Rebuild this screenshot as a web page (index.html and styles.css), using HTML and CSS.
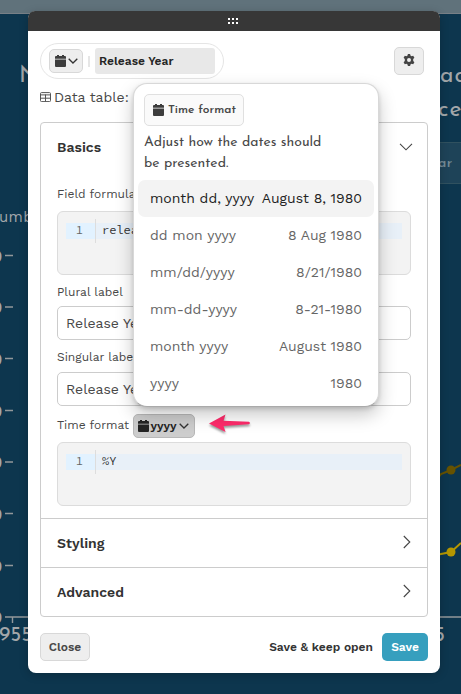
FILE: index.html
```html
<!DOCTYPE html>
<html lang="en">
<head>
<meta charset="utf-8">
<title>Field settings</title>
<link rel="stylesheet" href="styles.css">
</head>
<body>
<svg class="backdrop" width="461" height="694" viewBox="0 0 461 694" aria-hidden="true">
  <rect width="461" height="694" fill="#0d364e"/>
  <rect width="461" height="13" fill="#60727b"/>
  <rect y="13" width="461" height="1" fill="#788087"/>
  <rect x="400" y="142.500" width="80" height="41" fill="#1e4358" stroke="#30515f"/>
  <g class="chart-text">
    <text class="title" x="19" y="82">N</text>
    <text class="title" x="440" y="82">ac</text>
    <text class="title" x="438" y="116">ce</text>
    <text class="year" x="438" y="167">ar</text>
    <text class="axis" x="-1" y="222">umber</text>
    <text class="tick zero" x="-11" y="263">0</text>
    <text class="tick zero" x="-11" y="314">0</text>
    <text class="tick zero" x="-11" y="366">0</text>
    <text class="tick zero" x="-11" y="418">0</text>
    <text class="tick zero" x="-11" y="469">0</text>
    <text class="tick zero" x="-11" y="521">0</text>
    <text class="tick zero" x="-11" y="573">0</text>
    <text class="tick zero" x="-11" y="624">0</text>
    <text class="tick" x="-1" y="641">955</text>
    <text class="tick" x="434" y="641">5</text>
  </g>
  <path d="M5 255.500h8M5 307h8M5 358.500h8M5 410.500h8M5 462h8M5 513.500h8M5 565.500h8M5 617h456M12.500 617v6" stroke="#92989b" stroke-width="1.400" fill="none"/>
  <path d="M436 480L441 474L451 470L461 465" stroke="#665200" stroke-width="2" fill="none"/>
  <circle cx="451" cy="470" r="4.500" fill="#665200"/>
  <path d="M436 555L441 554L451 552L461 543" stroke="#b59700" stroke-width="2" fill="none"/>
  <circle cx="451" cy="552" r="4.500" fill="#b59700"/>
</svg>

<main class="modal">
  <header class="grip">
    <svg width="12" height="6" viewBox="0 0 12 6" fill="#fff"><path d="M1 0h2v2H1zM5 0h2v2H5zM9 0h2v2H9zM1 4h2v2H1zM5 4h2v2H5zM9 4h2v2H9z"/></svg>
  </header>
  <div class="content">
    <div class="toolbar">
      <div class="pill">
        <button class="type-btn">
          <svg class="cal" viewBox="0 0 11 12"><path d="M2 0h2v1h3V0h2v1h1a1 1 0 0 1 1 1v1.800H0V2a1 1 0 0 1 1-1h1zM0 4.500h11V11a1 1 0 0 1-1 1H1a1 1 0 0 1-1-1z"/></svg>
          <svg class="chev" viewBox="0 0 10 6"><path d="M.7.700L5 5L9.300.7"/></svg>
        </button>
        <span class="divider"></span>
        <div class="name">Release Year</div>
      </div>
      <button class="gear">
        <svg width="12" height="12" viewBox="0 0 12 12"><path fill-rule="evenodd" d="M4.900 0h2.200l.35 1.600 1.100.65L10.200 1.700l1.200 2L10.200 4.900v1.400v.8l1.200 1.200-1.200 2-1.650-.55-1.100.65L7.100 12H4.900l-.35-1.600-1.100-.65-1.650.55-1.200-2L1.800 7.100V4.900L.6 3.700l1.200-2 1.650.55 1.100-.65zM6 4a2 2 0 1 0 0 4a2 2 0 0 0 0-4z"/></svg>
      </button>
    </div>
    <div class="table-row">
      <svg width="11" height="10" viewBox="0 0 11 10"><path d="M1.500.600h8a1 1 0 0 1 1 1v7a1 1 0 0 1-1 1h-8a1 1 0 0 1-1-1v-7a1 1 0 0 1 1-1zM.5 2.900h10M.5 6.200h10M5.500 2.500v7" fill="none" stroke="#555"/></svg>
      <span>Data table:</span>
    </div>

    <div class="accordion">
      <section>
        <h2 class="head first"><span>Basics</span><svg width="14" height="8" viewBox="0 0 14 8"><path d="M1 .8L7 6.800L13 .8"/></svg></h2>
        <div class="fields">
          <label class="label l1">Field formula</label>
          <div class="editor"><div class="gutter">1</div><div class="code">relea</div></div>
          <label class="label l2">Plural label</label>
          <div class="input">Release Year</div>
          <label class="label l3">Singular label</label>
          <div class="input">Release Year</div>
          <div class="format-row">
            <span class="label l4">Time format</span>
            <button class="format-btn">
              <svg class="cal" viewBox="0 0 11 12"><path d="M2 0h2v1h3V0h2v1h1a1 1 0 0 1 1 1v1.800H0V2a1 1 0 0 1 1-1h1zM0 4.500h11V11a1 1 0 0 1-1 1H1a1 1 0 0 1-1-1z"/></svg>
              <span>yyyy</span>
              <svg class="chev" viewBox="0 0 10 6"><path d="M.7.700L5 5L9.300.7"/></svg>
            </button>
            <svg class="arrow" width="44" height="22" viewBox="0 0 44 22"><path d="M1 10.500L17.500 1.500L15.500 7.700L41 8.800Q43 10.100 41 11.300L15.500 13L17.500 19Z"/></svg>
          </div>
          <div class="editor"><div class="gutter">1</div><div class="code">%Y</div></div>
        </div>
      </section>
      <section><h2 class="head"><span>Styling</span><svg width="8" height="14" viewBox="0 0 8 14"><path d="M.8 1L6.800 7L.8 13"/></svg></h2></section>
      <section><h2 class="head"><span>Advanced</span><svg width="8" height="14" viewBox="0 0 8 14"><path d="M.8 1L6.800 7L.8 13"/></svg></h2></section>
    </div>

    <footer class="footer">
      <button class="btn close">Close</button>
      <button class="btn keep">Save &amp; keep open</button>
      <button class="btn save">Save</button>
    </footer>
  </div>

  <div class="popup">
    <div class="chip">
      <svg class="cal" viewBox="0 0 11 12"><path d="M2 0h2v1h3V0h2v1h1a1 1 0 0 1 1 1v1.800H0V2a1 1 0 0 1 1-1h1zM0 4.500h11V11a1 1 0 0 1-1 1H1a1 1 0 0 1-1-1z"/></svg>
      <span>Time format</span>
    </div>
    <p class="hint">Adjust how the dates should<br>be presented.</p>
    <ul class="options">
      <li class="active"><span>month dd, yyyy</span><span>August 8, 1980</span></li>
      <li><span>dd mon yyyy</span><span>8 Aug 1980</span></li>
      <li><span>mm/dd/yyyy</span><span>8/21/1980</span></li>
      <li><span>mm-dd-yyyy</span><span>8-21-1980</span></li>
      <li><span>month yyyy</span><span>August 1980</span></li>
      <li><span>yyyy</span><span>1980</span></li>
    </ul>
  </div>
</main>
</body>
</html>
```
FILE: styles.css
```css
* { box-sizing: border-box; }
body {
  margin: 0;
  height: 694px;
  overflow: hidden;
  padding: 11px 21px 0 28px;
  background: #0d364e;
  font-family: "Work Sans", Inter, "Liberation Sans", sans-serif;
  color: #484848;
}
button { font: inherit; color: inherit; margin: 0; padding: 0; border: 0; background: none; }
svg { flex: none; display: block; }

.backdrop { position: absolute; left: 0; top: 0; }
.chart-text { font-family: "Josefin Sans", Lato, sans-serif; fill: #a3a7aa; }
.title { font-size: 23px; letter-spacing: 1px; }
.year { font-size: 14px; font-weight: 600; fill: #748a95; letter-spacing: .5px; }
.axis { font-family: "Work Sans", Inter, sans-serif; font-size: 15px; letter-spacing: .3px; }
.tick { font-size: 21px; }
.zero { font-weight: 600; }

.modal {
  position: relative;
  height: 662px;
  border-radius: 8px;
  background: #fff;
  box-shadow: 0 2px 10px rgba(0, 0, 0, .2);
}
.grip {
  height: 20px;
  border-radius: 7px 7px 0 0;
  background: #373737;
  display: flex;
  align-items: center;
  justify-content: center;
}
.grip svg { margin-left: -2px; }
.content { padding: 12px; }

.toolbar { display: flex; justify-content: space-between; height: 36px; }
.pill {
  width: 184px;
  border: 1px solid #e5e5e5;
  border-radius: 18px;
  display: flex;
  align-items: flex-start;
  padding: 4px 8px;
}
.type-btn {
  width: 34px;
  height: 24px;
  margin-top: 1px;
  border: 1px solid #d8d8d8;
  border-radius: 5px;
  background: #eee;
  display: flex;
  align-items: center;
  justify-content: center;
  gap: 2px;
}
.type-btn .cal { margin-left: -1px; margin-top: -1px; }
.type-btn .chev { margin-right: -1px; }
.cal { width: 11px; height: 12px; fill: #3d3d3d; }
.chev { width: 10px; height: 6px; fill: none; stroke: #333; stroke-width: 1.3; }
.divider { width: 2px; height: 11px; margin: 8px 5px 0 5px; background: #e6e6e6; }
.name {
  width: 120px;
  height: 26px;
  line-height: 26px;
  padding-left: 4px;
  border-radius: 3px;
  background: #e8e8e8;
  color: #252525;
  font-size: 12px;
  font-weight: 600;
}
.gear {
  width: 30px;
  height: 28px;
  margin: 4px 4px 0 0;
  border: 1px solid #d8d8d8;
  border-radius: 5px;
  background: #eee;
  fill: #444;
  display: flex;
  align-items: center;
  justify-content: center;
}
.gear svg { margin-top: -2px; }
.table-row {
  display: flex;
  align-items: center;
  gap: 3px;
  height: 20px;
  margin-top: 8px;
  font-size: 14px;
}

.accordion { margin-top: 15px; border: 1px solid #ccc; border-radius: 4px; height: 495px; }
section + section { border-top: 1px solid #ccc; }
.head {
  margin: 0;
  height: 48px;
  padding: 0 16px;
  display: flex;
  align-items: center;
  justify-content: space-between;
  font-size: 14px;
  font-weight: 600;
  color: #333;
}
.head svg { fill: none; stroke: #444; stroke-width: 1.1; margin-top: -3px; }
.first svg { margin: 0 -2px 0 0; }
.fields { height: 347px; padding: 12px 16px; }
.label { display: block; font-size: 12px; line-height: 16px; white-space: nowrap; }
.l1 { margin: 3px 0 9px; }
.l2 { margin: 9px 0 6px; }
.l3 { margin: 9px 0 7px; }
.editor {
  height: 64px;
  padding: 8px;
  border: 1px solid #dcdcdc;
  border-radius: 6px;
  background: #f3f3f3;
  display: flex;
  font: 12px/18px "Source Code Pro", "Noto Mono", "DejaVu Sans Mono", monospace;
}
.gutter {
  width: 30px;
  height: 24px;
  padding-right: 12px;
  margin-top: -1px;
  border-right: 1px solid #ddd;
  background: linear-gradient(#e2f2ff, #e2f2ff) 0 4px / 100% 16px no-repeat;
  text-align: right;
  line-height: 22px;
  color: #666;
}
.code {
  flex: 1;
  height: 16px;
  margin-top: 3px;
  padding-left: 6px;
  background: #e8f0f8;
  line-height: 14px;
  color: #333;
}
.input {
  height: 34px;
  padding-left: 8px;
  border: 1px solid #ccc;
  border-radius: 5px;
  font-size: 14px;
  line-height: 32px;
}
.format-row { display: flex; height: 36px; align-items: center; }
.l4 { width: 76px; margin-top: 2px; }
.format-btn {
  width: 62px;
  height: 24px;
  margin-top: 4px;
  border: 1px solid #b8b8b8;
  border-radius: 5px;
  background: #cdcdcd;
  display: flex;
  align-items: center;
  justify-content: center;
  gap: 2px;
  font-size: 12px;
  font-weight: 600;
  color: #252525;
}
.format-btn .cal { fill: #252525; margin-left: -1px; margin-right: -1px; }
.arrow { margin-left: 13px; fill: #ff2b6b; filter: drop-shadow(0 2px 1px rgba(0, 0, 0, .4)); }

.footer { display: flex; margin-top: 16px; height: 28px; font-size: 12px; font-weight: 600; }
.btn { border-radius: 5px; }
.close { width: 50px; border: 1px solid #d8d8d8; background: #eee; }
.keep { margin-left: auto; color: #333; }
.save { width: 46px; margin-left: 9px; background: #369fbe; color: #fff; }

.popup {
  position: absolute;
  left: 105px;
  top: 72px;
  width: 246px;
  height: 324px;
  padding: 10px 4px 4px;
  border: 1px solid #d8d8d8;
  border-bottom-color: #aaa;
  border-radius: 14px;
  background: #fff;
  box-shadow: 0 8px 18px rgba(0, 0, 0, .22), 0 2px 4px rgba(0, 0, 0, .14);
}
.chip {
  width: 100px;
  height: 32px;
  margin-left: 6px;
  padding-left: 8px;
  border: 1px solid #e0e0e0;
  border-radius: 5px;
  background: #fafafa;
  display: flex;
  align-items: center;
  gap: 4px;
  font: 600 12px "Josefin Sans", Lato, sans-serif;
  white-space: nowrap;
}
.chip .cal { margin-top: -1px; }
.hint {
  height: 54px;
  margin: 0;
  padding: 6px 0 0 6px;
  font: 400 14px/21px "Josefin Sans", Lato, sans-serif;
  white-space: nowrap;
}
.options { list-style: none; margin: 0; padding: 0; }
.options li {
  height: 37px;
  padding: 0 12px 2px;
  display: flex;
  align-items: center;
  justify-content: space-between;
  border-radius: 7px;
  font-size: 14px;
  color: #666;
  white-space: nowrap;
}
.options .active { background: #f3f3f3; color: #222; }
```
